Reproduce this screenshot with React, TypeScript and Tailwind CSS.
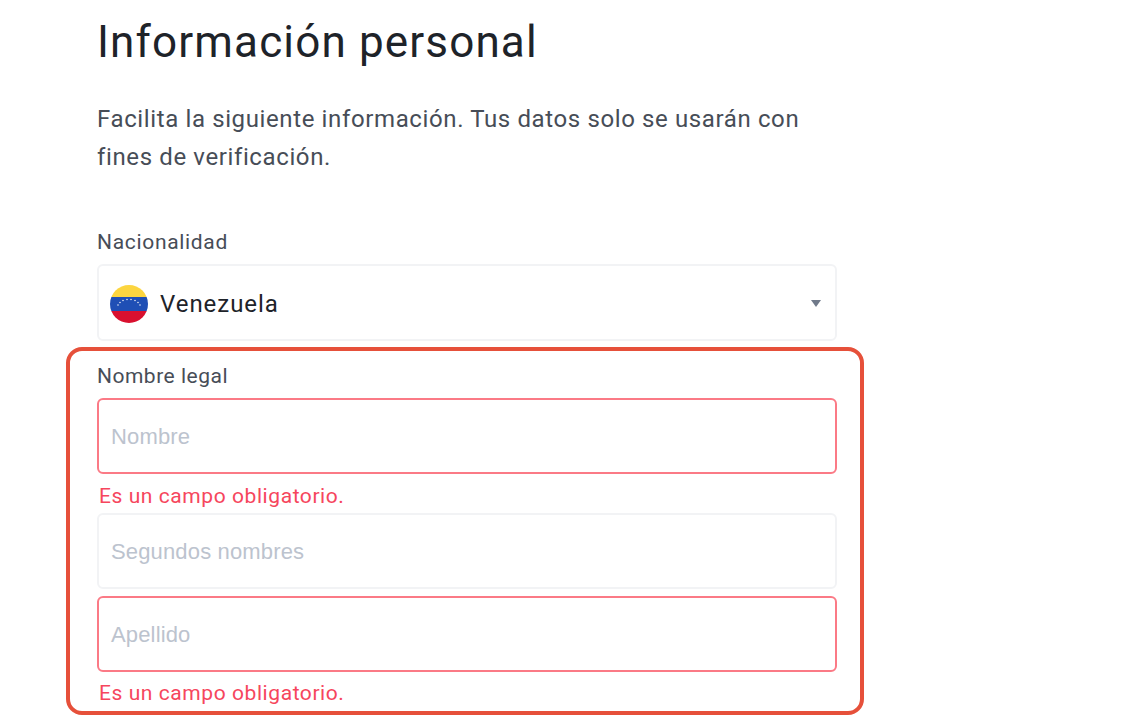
import React from 'react';

const FONT = "font-['Roboto','Liberation_Sans',sans-serif]";

const Flag = () => (
  <svg width="38" height="38" viewBox="0 0 38 38" className="shrink-0">
    <defs>
      <clipPath id="flag-circle">
        <circle cx="19" cy="19" r="19" />
      </clipPath>
    </defs>
    <g clipPath="url(#flag-circle)">
      <rect width="38" height="12" fill="#fcd53f" />
      <rect y="12" width="38" height="14" fill="#1f4fb5" />
      <rect y="26" width="38" height="12" fill="#d9102f" />
    </g>
    {[[8, 20], [10, 17.5], [13, 15.5], [17, 14.5], [21, 14.5], [25, 15.5], [28, 17.5], [30, 20]].map(([x, y]) => (
      <circle key={x} cx={x} cy={y} r="0.8" fill="#ffffff" opacity="0.85" />
    ))}
  </svg>
);

const TextField = ({ placeholder, error }: { placeholder: string; error?: boolean }) => (
  <div
    className={`h-[76px] rounded-[6px] flex items-center px-[12px] border-2 ${
      error ? 'border-[#fb7a86]' : 'border-[#f2f3f5]'
    }`}
  >
    <span className="font-['Liberation_Sans',sans-serif] text-[22px] tracking-[0.15px] text-[#bcc3ce]">{placeholder}</span>
  </div>
);

const ErrorText = ({ gap }: { gap: string }) => (
  <p className={`text-[21px] leading-[24px] tracking-[0.57px] text-[#f6465d] pl-[2px] ${gap}`}>Es un campo obligatorio.</p>
);

export default function App() {
  return (
    <div className={`w-[1146px] h-[728px] overflow-hidden bg-white ${FONT}`}>
      <div className="w-[740px] ml-[97px] pt-[13px]">
        <h1 className="text-[44px] leading-[58px] font-[450] text-[#1e2329] tracking-[1.15px]">Información personal</h1>
        <p className="mt-[29px] text-[24px] leading-[38px] tracking-[0.62px] text-[#474d57] w-[720px]">
          Facilita la siguiente información. Tus datos solo se usarán con fines de verificación.
        </p>

        <label className="block mt-[54px] text-[21px] leading-[24px] tracking-[0.68px] text-[#474d57]">Nacionalidad</label>
        <div className="mt-[10px] h-[77px] rounded-[6px] border-2 border-[#f2f3f5] flex items-center pl-[11px] pr-[14px] pt-[2px]">
          <Flag />
          <span className="ml-[12px] text-[24px] tracking-[0.95px] text-[#1e2329]">Venezuela</span>
          <svg width="10" height="7" viewBox="0 0 10 7" className="ml-auto">
            <path d="M0 0h10L5 7z" fill="#707a8a" />
          </svg>
        </div>

        <div className="mt-[6px] -ml-[31px] -mr-[27px] h-[368px] rounded-[16px] border-4 border-[#e6503a] pl-[27px] pr-[23px] pt-[13px]">
          <label className="block text-[21px] leading-[24px] tracking-[0.5px] text-[#474d57]">Nombre legal</label>
          <div className="mt-[10px]">
            <TextField placeholder="Nombre" error />
          </div>
          <ErrorText gap="mt-[10px]" />
          <div className="mt-[5px]">
            <TextField placeholder="Segundos nombres" />
          </div>
          <div className="mt-[7px]">
            <TextField placeholder="Apellido" error />
          </div>
          <ErrorText gap="mt-[9px]" />
        </div>
      </div>
    </div>
  );
}
